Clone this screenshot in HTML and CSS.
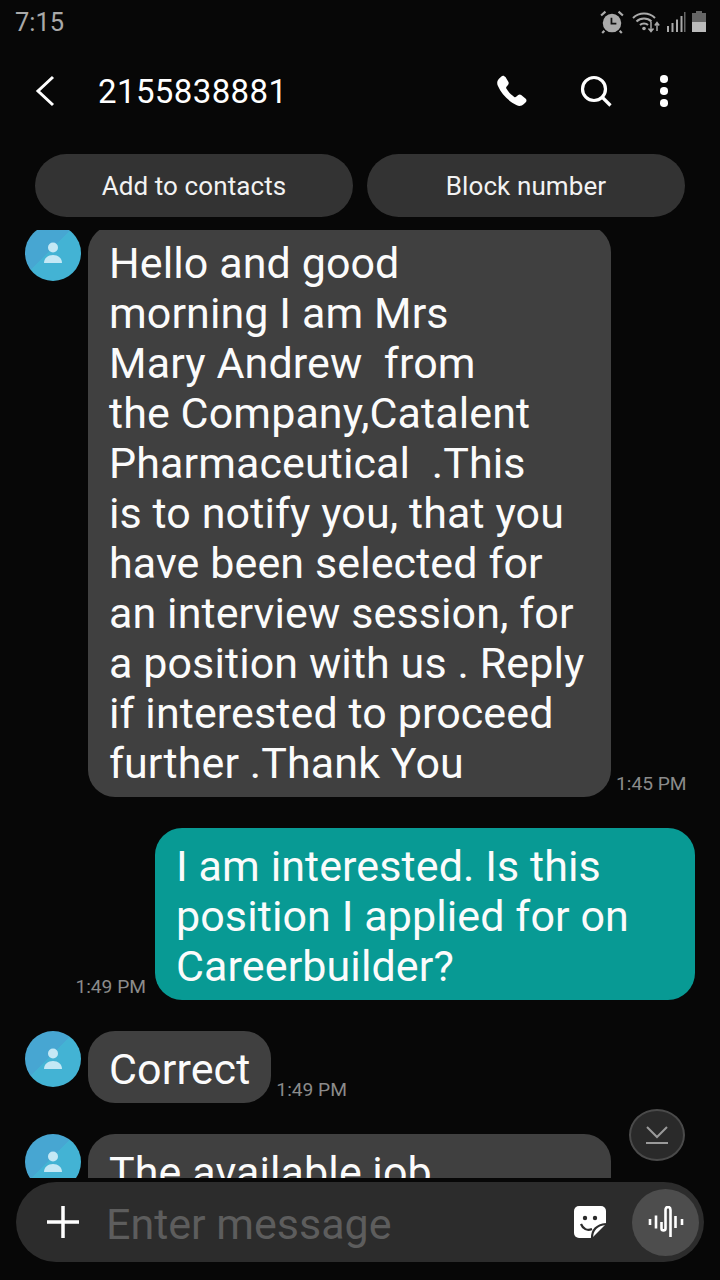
FILE: index.html
```html
<!DOCTYPE html>
<html lang="en">
<head>
    <meta charset="UTF-8">
    <meta name="viewport" content="width=device-width, initial-scale=1.0">
    <title>2155838881</title>
    <link rel="stylesheet" href="styles.css">
</head>
<body>
    <div class="phone">
        <div class="status-bar">
            <span class="clock">7:15</span>
            <div class="status-icons">
                <svg class="alarm" width="24" height="24" viewBox="0 0 22 22">
                    <circle cx="11" cy="12" r="8.5" fill="#aaa"/>
                    <path d="M10.5 7v5.5h4.5" fill="none" stroke="#111" stroke-width="1.6"/>
                    <path d="M1 5l4-3.5M21 5l-4-3.5M4 19l-2 2M18 19l2 2" stroke="#aaa" stroke-width="2"/>
                </svg>
                <svg width="28" height="22" viewBox="0 0 28 22">
                    <path d="M1 7c6-6 16-6 22 0M4.500 10.500c4-4 11-4 15 0M8 14c2-2 6-2 8 0" fill="none" stroke="#aaa" stroke-width="2"/>
                    <circle cx="12" cy="17.500" r="1.800" fill="#aaa"/>
                    <path d="M19 11v9M16.500 17.500l2.500 3 2.500-3M25 20v-8M22.800 14.500l2.200-3 2.200 3" fill="none" stroke="#aaa" stroke-width="1.500"/>
                </svg>
                <svg width="20" height="22" viewBox="0 0 20 22">
                    <path d="M1 15h2v6H1zM5.500 12h2v9h-2zM10 8.500h2V21h-2zM14.500 5h2v16h-2z" fill="#aaa"/>
                    <path d="M18 1h1.500v20H18z" fill="#666"/>
                </svg>
                <svg class="battery" width="14" height="22" viewBox="0 0 14 22">
                    <path d="M4 0h6v2h4v9H0V2h4z" fill="#666"/>
                    <path d="M0 11h14v10H0z" fill="#bbb"/>
                </svg>
            </div>
        </div>

        <div class="app-bar">
            <svg class="back" width="20" height="32" viewBox="0 0 20 32">
                <path d="M18 2L3 16l15 14" fill="none" stroke="#fff" stroke-width="3"/>
            </svg>
            <span class="title">2155838881</span>
            <div class="app-actions">
                <svg class="call" width="34" height="34" viewBox="0 0 24 24">
                    <path d="M6.600 1.500c-.8-.4-1.700-.2-2.300.4L2.800 3.400C1.500 4.700 1.200 6.600 2 8.300c2.700 6 7.400 10.900 13.400 13.800 1.700.8 3.700.4 5-.9l1.300-1.300c.7-.7.7-1.800 0-2.400l-3.200-2.600c-.6-.5-1.500-.5-2.100 0l-1.500 1.200c-.4.300-.9.300-1.300.1-2.300-1.500-4.200-3.500-5.600-5.900-.2-.4-.2-.9.100-1.300l1.200-1.500c.5-.6.500-1.500.1-2.100L7.400 2.200c-.2-.3-.5-.6-.8-.7z" fill="#fff"/>
                </svg>
                <svg class="search" width="34" height="34" viewBox="0 0 34 34">
                    <circle cx="15" cy="15" r="11.500" fill="none" stroke="#fff" stroke-width="3.200"/>
                    <path d="M23.500 23.500l8 8" stroke="#fff" stroke-width="3.200"/>
                </svg>
                <div class="more"><i></i><i></i><i></i></div>
            </div>
        </div>

        <div class="quick-actions">
            <button class="pill">Add to contacts</button>
            <button class="pill">Block number</button>
        </div>

        <div class="messages">
            <div class="row first">
                <div class="avatar">
                    <svg width="20" height="22" viewBox="0 0 20 22"><circle cx="10" cy="5.500" r="5" fill="#c4e8f5"/><path d="M1 21c0-5 4-8 9-8s9 3 9 8z" fill="#c4e8f5"/></svg>
                </div>
                <div class="bubble in wide">Hello and good
morning I am Mrs
Mary Andrew  from
the Company,Catalent
Pharmaceutical  .This
is to notify you, that you
have been selected for
an interview session, for
a position with us . Reply
if interested to proceed
further .Thank You</div>
                <span class="time">1:45 PM</span>
            </div>

            <div class="row mine">
                <span class="time">1:49 PM</span>
                <div class="bubble out">I am interested. Is this
position I applied for on
Careerbuilder?</div>
            </div>

            <div class="row">
                <div class="avatar">
                    <svg width="20" height="22" viewBox="0 0 20 22"><circle cx="10" cy="5.500" r="5" fill="#c4e8f5"/><path d="M1 21c0-5 4-8 9-8s9 3 9 8z" fill="#c4e8f5"/></svg>
                </div>
                <div class="bubble in">Correct</div>
                <span class="time">1:49 PM</span>
            </div>

            <div class="row">
                <div class="avatar">
                    <svg width="20" height="22" viewBox="0 0 20 22"><circle cx="10" cy="5.500" r="5" fill="#c4e8f5"/><path d="M1 21c0-5 4-8 9-8s9 3 9 8z" fill="#c4e8f5"/></svg>
                </div>
                <div class="bubble in wide">The available job</div>
            </div>

            <div class="scroll-down">
                <svg width="24" height="20" viewBox="0 0 24 20">
                    <path d="M2 2l10 10L22 2M1 18h22" fill="none" stroke="#9a9a9a" stroke-width="2"/>
                </svg>
            </div>
        </div>

        <div class="composer">
            <svg class="plus" width="32" height="32" viewBox="0 0 32 32">
                <path d="M16 0v32M0 16h32" stroke="#fff" stroke-width="3.500"/>
            </svg>
            <span class="placeholder">Enter message</span>
            <svg class="sticker" width="32" height="32" viewBox="0 0 32 32">
                <path d="M5 0h22a5 5 0 0 1 5 5v13L18 32H5a5 5 0 0 1-5-5V5a5 5 0 0 1 5-5z" fill="#fff"/>
                <circle cx="11" cy="12" r="2.200" fill="#2b2b2b"/>
                <circle cx="21" cy="12" r="2.200" fill="#2b2b2b"/>
                <path d="M7 18c2 5 6 7 11 5M18 32c0-8 5-13 14-14" fill="none" stroke="#2b2b2b" stroke-width="2.200"/>
            </svg>
            <div class="voice">
                <svg width="36" height="32" viewBox="0 0 36 32">
                    <path d="M2 13v6M8 9.500v13M13.500 16v6.500c0 2.500 4 2.500 4 0V4c0-4 5-4 5 0v27M27.500 10v12M34 13v6" fill="none" stroke="#fff" stroke-width="2.600"/>
                </svg>
            </div>
        </div>
    </div>
</body>
</html>
```

FILE: styles.css
```css
* {
    box-sizing: border-box;
}
html, body {
    margin: 0;
    padding: 0;
    background: #070707;
}
.phone {
    width: 720px;
    height: 1280px;
    display: flex;
    flex-direction: column;
    overflow: hidden;
    font-family: Roboto, "Liberation Sans", sans-serif;
    color: #fff;
}

/* status bar */
.status-bar {
    height: 44px;
    display: flex;
    align-items: center;
    justify-content: space-between;
    padding: 0 14px 0 15px;
}
.clock {
    font-size: 25.500px;
    color: #a9a9a9;
}
.status-icons {
    display: flex;
    align-items: center;
    gap: 6px;
}
.alarm {
    margin-right: 2px;
}

/* header */
.app-bar {
    height: 94px;
    display: flex;
    align-items: center;
    padding: 0 0 0 35px;
}
.back {
    margin-right: 43px;
}
.title {
    font-size: 33px;
    letter-spacing: 0.4px;
}
.app-actions {
    margin-left: auto;
    display: flex;
    align-items: center;
    padding-right: 52px;
}
.call {
    margin-right: 50px;
}
.search {
    margin-right: 47px;
}
.more {
    display: flex;
    flex-direction: column;
    gap: 4.500px;
    width: 8px;
}
.more i {
    width: 7.500px;
    height: 7.500px;
    border-radius: 50%;
    background: #fff;
}

/* add / block */
.quick-actions {
    display: flex;
    gap: 14px;
    padding: 16px 35px 13px;
}
.pill {
    flex: 1;
    height: 63px;
    border: none;
    border-radius: 32px;
    background: #333333;
    color: #f2f2f2;
    font-family: inherit;
    font-size: 26px;
    letter-spacing: 0.1px;
}

/* messages */
.messages {
    position: relative;
    height: 948px;
    overflow: hidden;
    display: flex;
    flex-direction: column;
    gap: 31px;
}
.row {
    display: flex;
    align-items: flex-start;
    padding: 0 25px;
    flex-shrink: 0;
}
.row.first {
    margin-top: -5px;
}
.row.mine {
    justify-content: flex-end;
    align-items: flex-end;
}
.avatar {
    width: 56px;
    height: 56px;
    flex-shrink: 0;
    margin-right: 7px;
    border-radius: 50%;
    background: linear-gradient(135deg, #47a6d2 45%, #43b3d4 45%);
    display: flex;
    align-items: center;
    justify-content: center;
}
.bubble {
    font-size: 43px;
    line-height: 50px;
    letter-spacing: 0.1px;
    padding: 13px 21px 9px 21px;
    border-radius: 27px;
    white-space: pre;
    color: #fbfbfb;
}
.bubble.in {
    background: #404040;
}
.bubble.wide {
    width: 523px;
    flex-shrink: 0;
}
.bubble.out {
    width: 540px;
    background: #089a94;
    flex-shrink: 0;
}
.time {
    font-size: 19.200px;
    color: #8b8b8b;
    white-space: nowrap;
    align-self: flex-end;
    margin: 0 0 2px 5px;
}
.mine .time {
    margin: 0 9px 2px 0;
}
.scroll-down {
    position: absolute;
    left: 629px;
    top: 879px;
    width: 56px;
    height: 52px;
    border-radius: 50%;
    border: 2px solid #4a4a4a;
    background: #2a2a2a;
    display: flex;
    align-items: center;
    justify-content: center;
}

/* input */
.composer {
    margin: 4px 16px 0;
    height: 80px;
    border-radius: 40px;
    background: #2c2c2c;
    display: flex;
    align-items: center;
    padding: 0 5px 0 31px;
}
.placeholder {
    margin-left: 27px;
    padding-top: 4px;
    font-size: 43px;
    color: #5d5d5d;
}
.sticker {
    margin-left: auto;
    margin-right: 26px;
}
.voice {
    width: 67px;
    height: 67px;
    border-radius: 50%;
    background: #4d4d4d;
    display: flex;
    align-items: center;
    justify-content: center;
}
```
